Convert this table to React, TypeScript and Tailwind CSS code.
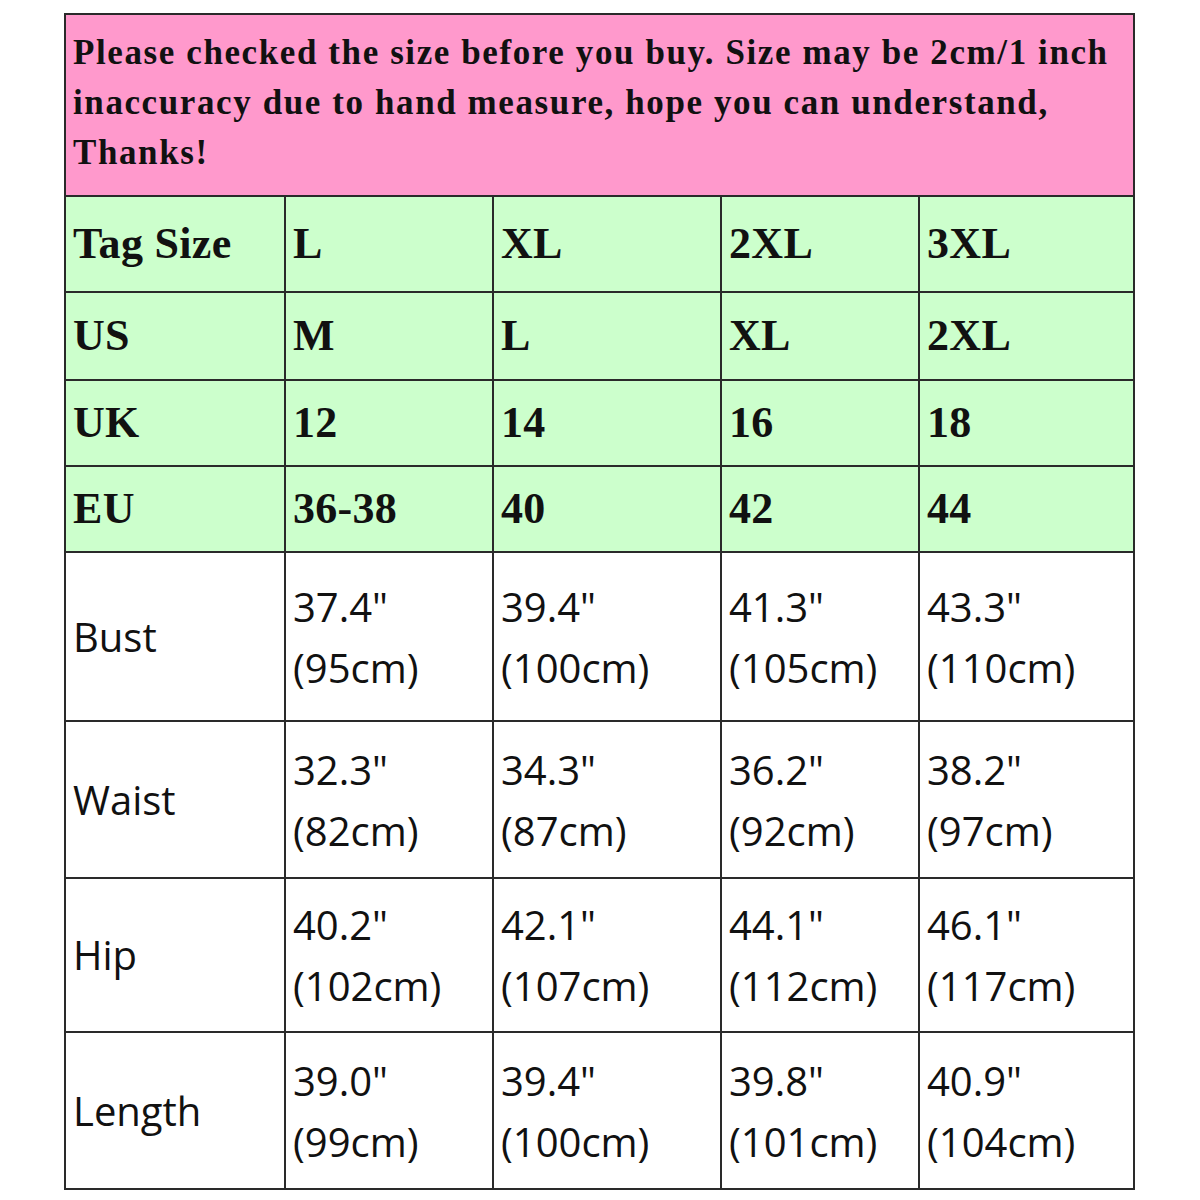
import React from 'react';

const sizes = ['L', 'XL', '2XL', '3XL'];

const codeRows = [
  { label: 'Tag Size', values: ['L', 'XL', '2XL', '3XL'], h: 'h-[96px]' },
  { label: 'US', values: ['M', 'L', 'XL', '2XL'], h: 'h-[88px]' },
  { label: 'UK', values: ['12', '14', '16', '18'], h: 'h-[86px]' },
  { label: 'EU', values: ['36-38', '40', '42', '44'], h: 'h-[86px]' },
];

const measureRows = [
  { label: 'Bust', values: [['37.4"', '(95cm)'], ['39.4"', '(100cm)'], ['41.3"', '(105cm)'], ['43.3"', '(110cm)']], h: 'h-[169px]' },
  { label: 'Waist', values: [['32.3"', '(82cm)'], ['34.3"', '(87cm)'], ['36.2"', '(92cm)'], ['38.2"', '(97cm)']], h: 'h-[157px]' },
  { label: 'Hip', values: [['40.2"', '(102cm)'], ['42.1"', '(107cm)'], ['44.1"', '(112cm)'], ['46.1"', '(117cm)']], h: 'h-[154px]' },
  { label: 'Length', values: [['39.0"', '(99cm)'], ['39.4"', '(100cm)'], ['39.8"', '(101cm)'], ['40.9"', '(104cm)']], h: 'h-[157px]' },
];

const cell = 'border-2 border-[#2a2a2a] pl-[7px] pr-[4px] text-left align-middle';
const serif = "font-['Liberation_Serif',serif] font-bold text-[44px] tracking-[0.3px] text-[#111]";
const sans = "font-['Open_Sans',sans-serif] text-[40px] text-[#111]";

export default function App() {
  return (
    <div className="w-[1200px] h-[1200px] bg-white pt-[13px] pl-[64px]">
      <table className="border-collapse table-fixed w-[1069px]">
        <colgroup>
          <col className="w-[220px]" />
          <col className="w-[208px]" />
          <col className="w-[228px]" />
          <col className="w-[198px]" />
          <col className="w-[215px]" />
        </colgroup>
        <tbody>
          {/* Notice */}
          <tr className="h-[182px] bg-[#ff99cc]">
            <td
              colSpan={sizes.length + 1}
              className={`${cell} font-['Liberation_Serif',serif] font-bold text-[35px] leading-[50px] tracking-[1.6px] text-[#111] whitespace-nowrap pb-[4px]`}
            >
              Please checked the size before you buy. Size may be 2cm/1 inch
              <br />
              inaccuracy due to hand measure, hope you can understand,
              <br />
              Thanks!
            </td>
          </tr>

          {/* Size codes */}
          {codeRows.map((row) => (
            <tr key={row.label} className={`${row.h} bg-[#ccffcc]`}>
              <td className={`${cell} ${serif}`}>{row.label}</td>
              {row.values.map((v, i) => (
                <td key={i} className={`${cell} ${serif}`}>{v}</td>
              ))}
            </tr>
          ))}

          {/* Measurements */}
          {measureRows.map((row) => (
            <tr key={row.label} className={`${row.h} bg-white`}>
              <td className={`${cell} ${sans}`}>{row.label}</td>
              {row.values.map((v, i) => (
                <td key={i} className={`${cell} ${sans} leading-[61px]`}>
                  <div>{v[0]}</div>
                  <div>{v[1]}</div>
                </td>
              ))}
            </tr>
          ))}
        </tbody>
      </table>
    </div>
  );
}
